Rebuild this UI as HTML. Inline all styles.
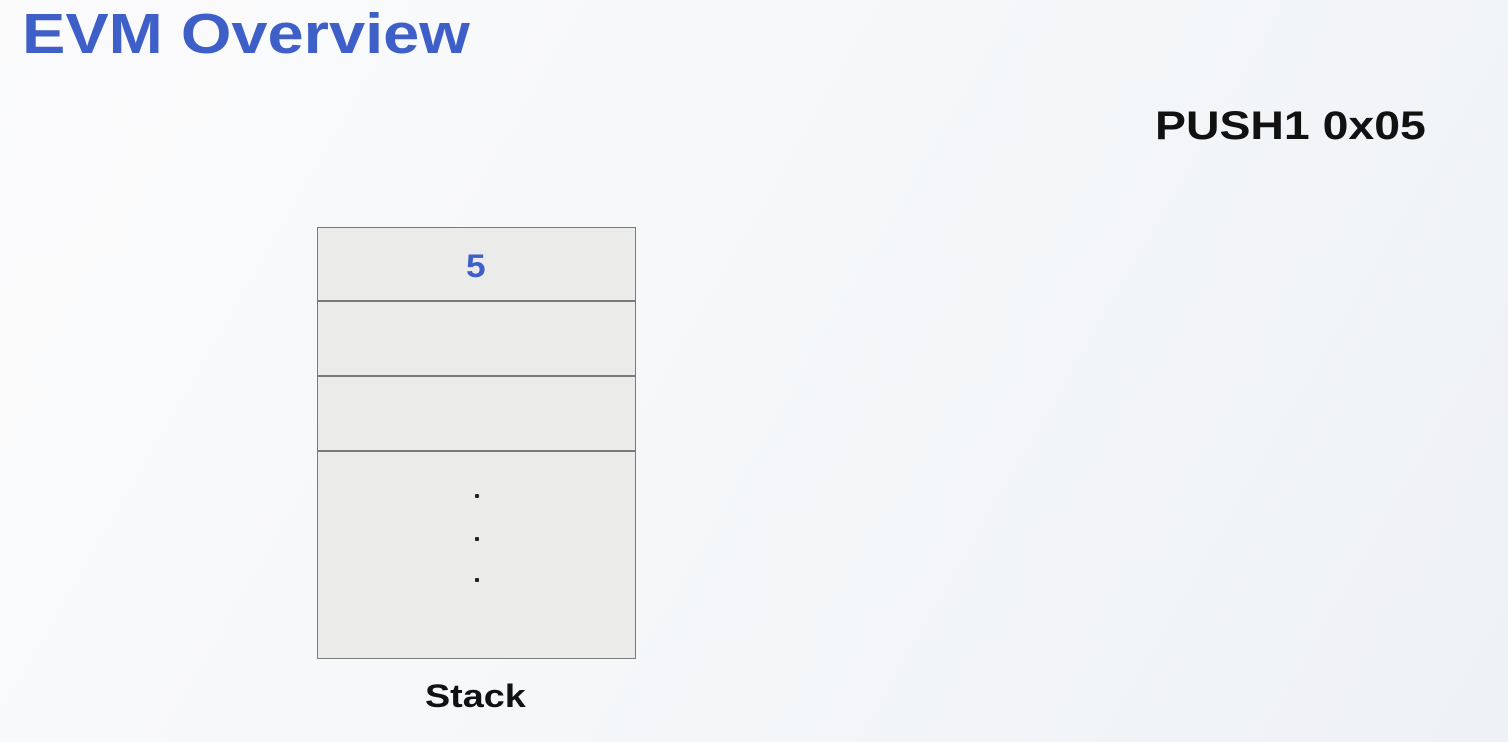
<!DOCTYPE html>
<html><head><style>
html,body{margin:0;padding:0}
body{width:1508px;height:742px;overflow:hidden;position:relative;background:linear-gradient(120deg,#fbfbfc 0%,#f5f7f9 50%,#eef1f6 100%);font-family:"Liberation Sans",sans-serif;font-weight:bold}
.t{position:absolute;white-space:nowrap;transform-origin:left top}
.box{position:absolute;left:317px;top:227px;width:317px;height:430px;border:1px solid #7a7a7a;background:#ebebea}
.line{position:absolute;left:0;width:100%;height:2px;background:#7a7a7a}
.dot{position:absolute;left:157px;width:4px;height:4px;background:#222;border-radius:1px}
</style></head><body>
<div class="t" style="left:22px;top:1px;font-size:57px;color:#3f5fc8;transform:scaleX(1.14)">EVM Overview</div>
<div class="t" style="left:1155px;top:104px;font-size:40px;color:#111;transform:scaleX(1.16)">PUSH1 0x05</div>
<div class="box">
<div class="line" style="top:72px"></div>
<div class="line" style="top:147px"></div>
<div class="line" style="top:222px"></div>
<div class="t" style="left:148px;top:20px;font-size:32px;color:#3f5fc8;transform:scaleX(1.1)">5</div>
<div class="dot" style="top:266px"></div>
<div class="dot" style="top:309px"></div>
<div class="dot" style="top:350px"></div>
</div>
<div class="t" style="left:425px;top:678px;font-size:32px;color:#111;transform:scaleX(1.18)">Stack</div>
</body></html>
